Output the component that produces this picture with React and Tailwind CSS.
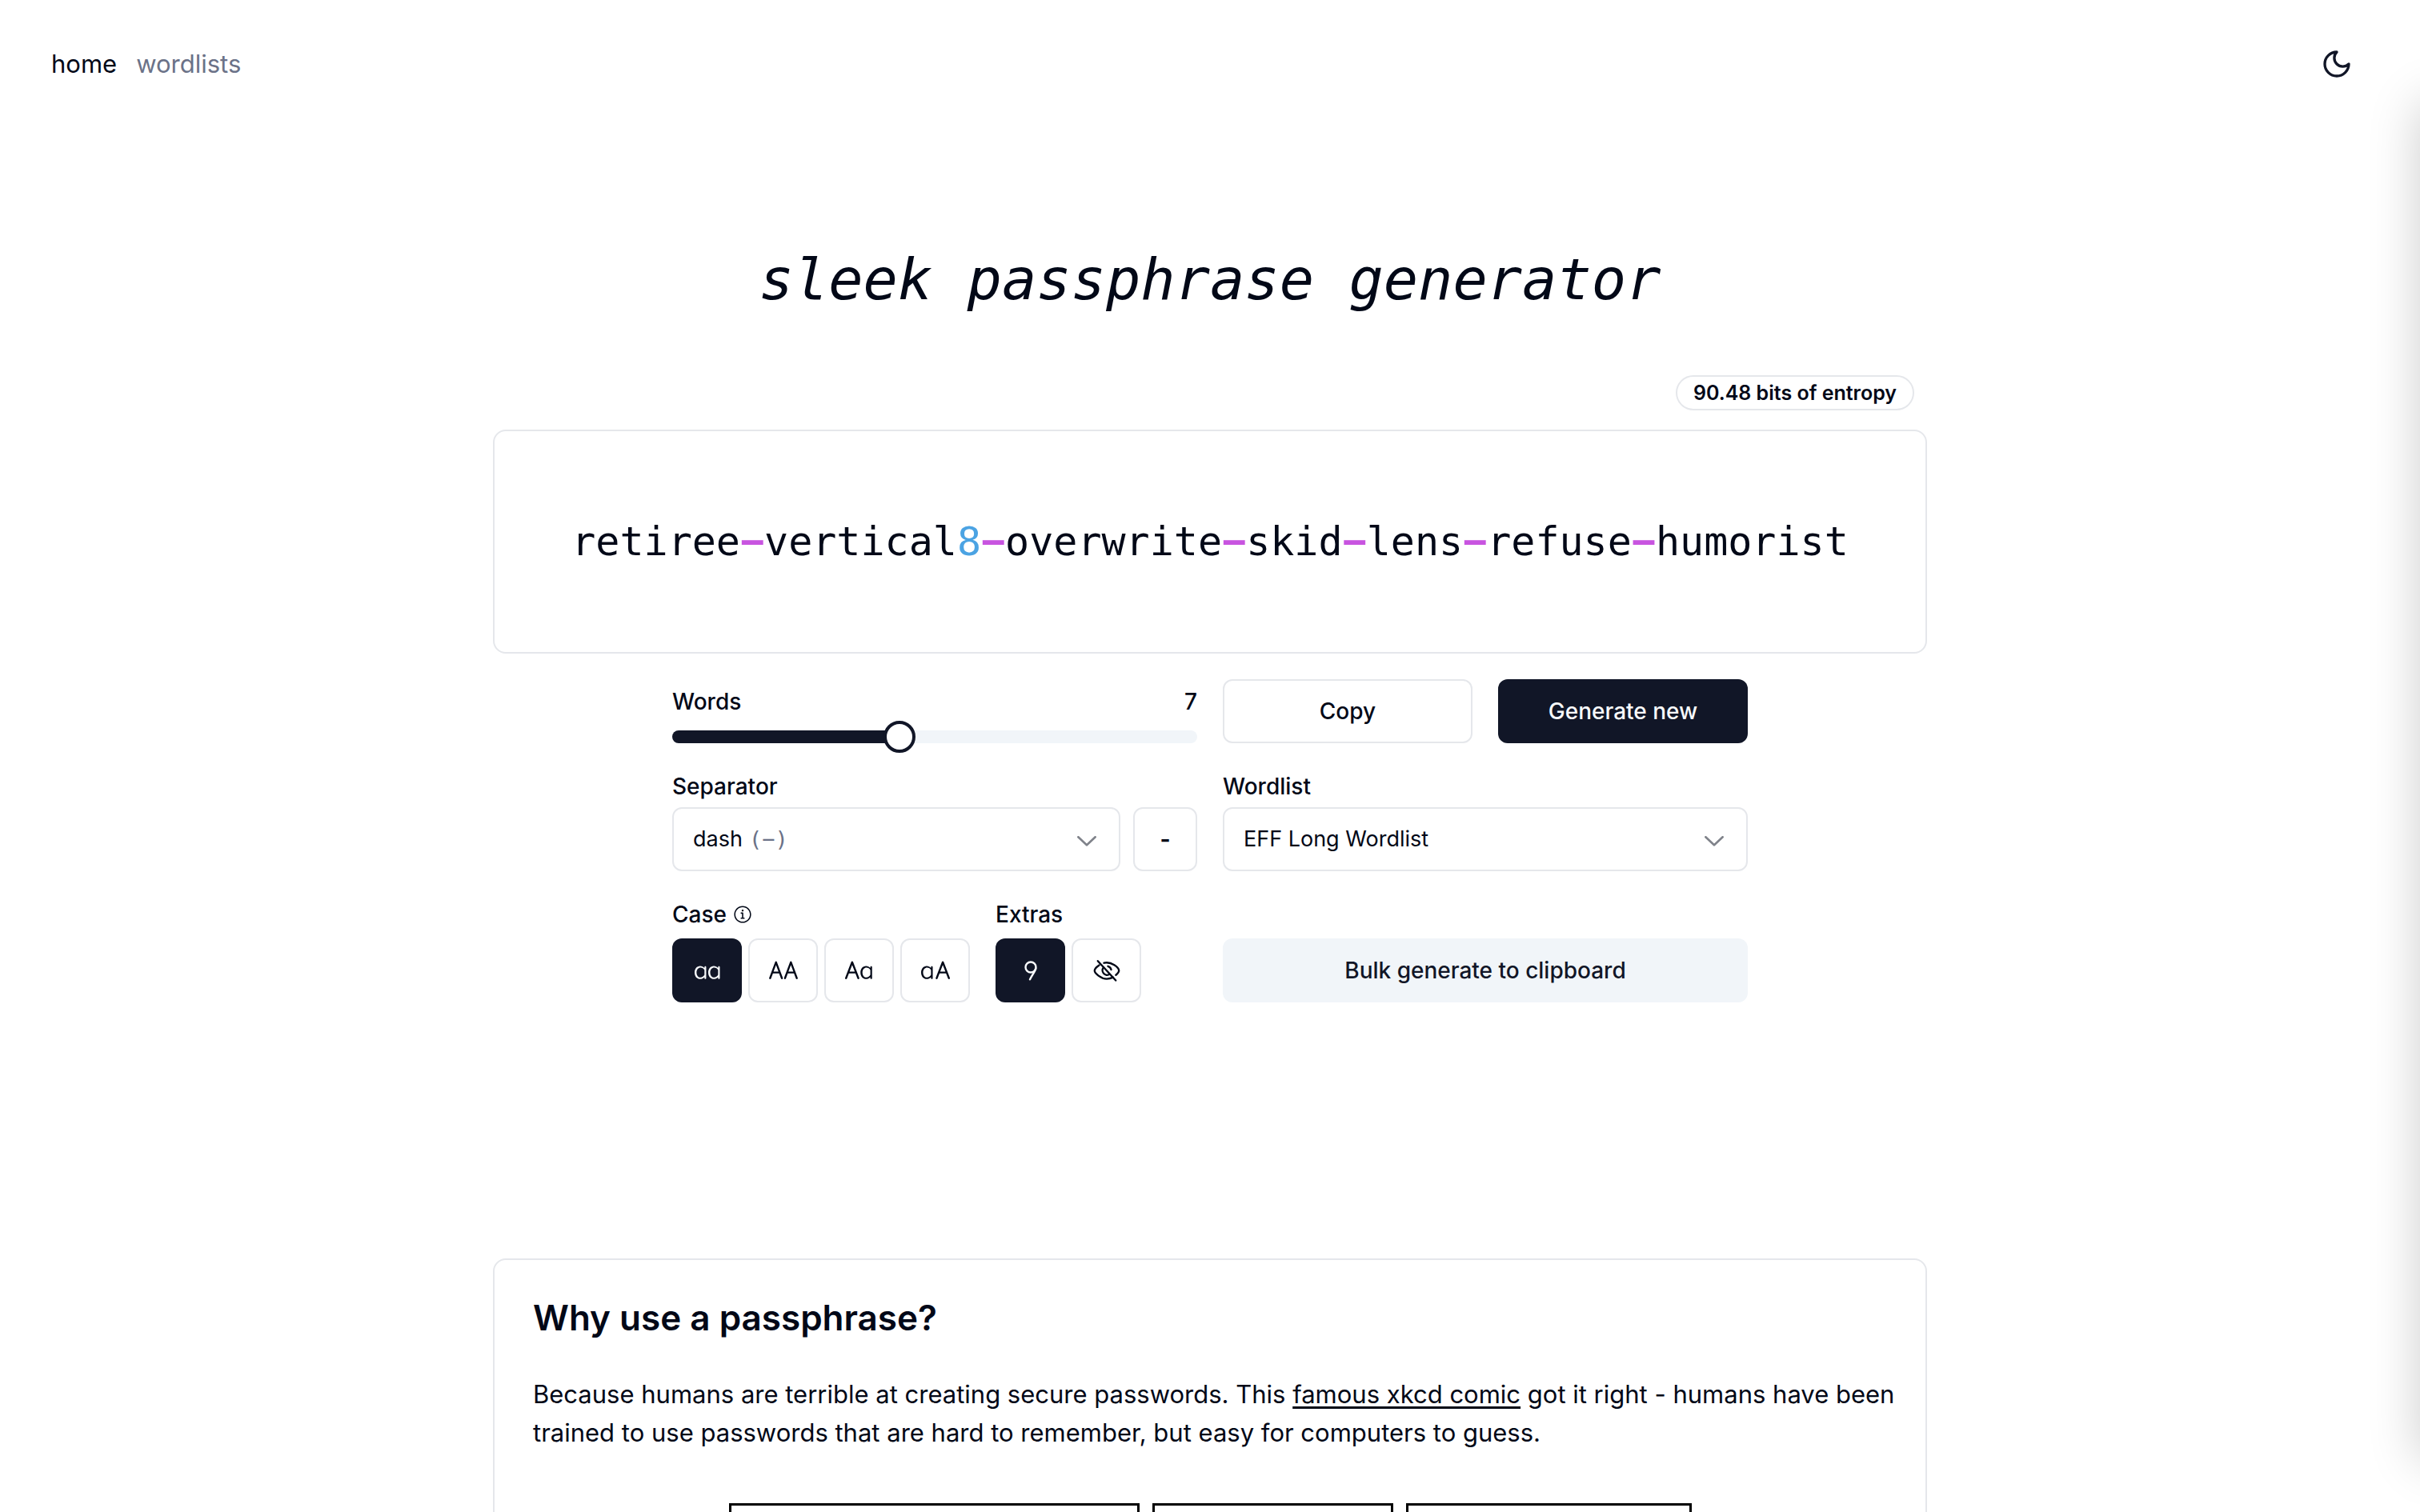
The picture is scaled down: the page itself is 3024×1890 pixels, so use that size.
import React, { useState } from "react";
import {
  RxChevronDown,
  RxInfoCircled,
  RxLetterCaseCapitalize,
  RxLetterCaseLowercase,
  RxLetterCaseToggle,
  RxLetterCaseUppercase,
} from "react-icons/rx";

const passphrase = ["retiree", "−", "vertical", "8", "−", "overwrite", "−", "skid", "−", "lens", "−", "refuse", "−", "humorist"];

function MoonIcon() {
  return (
    <svg viewBox="0 0 24 24" className="size-10" fill="none" stroke="currentColor" strokeWidth="2" strokeLinecap="round" strokeLinejoin="round" aria-hidden="true">
      <path d="M12 3a6 6 0 0 0 9 9 9 9 0 1 1-9-9Z" />
    </svg>
  );
}

function NineIcon() {
  return (
    <svg viewBox="0 0 40 40" className="size-10" fill="none" stroke="currentColor" strokeWidth="2.4" strokeLinecap="round" strokeLinejoin="round" aria-hidden="true">
      <circle cx="20" cy="16" r="6.500" />
      <path d="M26.300 17.500C25.500 21.500 21.500 26 19 31.300" />
    </svg>
  );
}

function EyeOffIcon() {
  return (
    <svg viewBox="0 0 40 40" className="size-10" fill="none" stroke="currentColor" strokeWidth="2.400" strokeLinecap="round" strokeLinejoin="round" aria-hidden="true">
      <path d="M10.500 13.500C8 15.200 4.800 18.500 4.800 20.300C4.800 23.500 12.500 30.600 20 30.600C22.800 30.600 25.500 29.900 28 28.700" />
      <path d="M16.500 10.700C26 8.600 35.200 16.500 35.200 20.300C35.200 22 33.500 24 31.400 25.700" />
      <path d="M21.500 14.800A5.800 5.800 0 0 1 25.500 19" />
      <path d="M16 16.200A5.800 5.800 0 0 0 23.600 24.800" />
      <path d="M8.800 8.200L31.200 32.500" />
    </svg>
  );
}

function ToggleButton({ active, label, onClick, children }) {
  return (
    <button
      type="button"
      aria-label={label}
      aria-pressed={active}
      onClick={onClick}
      className={
        active
          ? "flex h-20 w-[87px] items-center justify-center rounded-xl bg-[#111627] text-slate-50"
          : "flex h-20 w-[87px] items-center justify-center rounded-xl border-2 border-gray-200 bg-white"
      }
    >
      {children}
    </button>
  );
}

function Chevron() {
  return (
    <RxChevronDown
      className="pointer-events-none z-10 col-start-1 row-start-1 mr-[22px] size-10 self-center justify-self-end opacity-50"
      aria-hidden="true"
    />
  );
}

export default function App() {
  const [words, setWords] = useState(7);
  const [letterCase, setLetterCase] = useState("lower");
  const [digit, setDigit] = useState(true);
  const [hidden, setHidden] = useState(false);
  const cases = [
    ["lower", "Lowercase", RxLetterCaseLowercase],
    ["upper", "Uppercase", RxLetterCaseUppercase],
    ["capital", "Capitalize", RxLetterCaseCapitalize],
    ["toggle", "Mixed case", RxLetterCaseToggle],
  ];
  return (
    <div className="relative h-screen overflow-hidden bg-white font-[Inter,sans-serif] text-[31px] text-[#020817]">
      <header className="flex h-40 items-center justify-between px-16">
        <nav className="flex gap-6">
          <a href="#home">home</a>
          <a href="#wordlists" className="text-[#6b7288]">wordlists</a>
        </nav>
        <button type="button" aria-label="Toggle theme" className="flex size-20 items-center justify-center text-[#111627]">
          <MoonIcon />
        </button>
      </header>

      <main className="mx-auto flex max-w-[1792px] flex-col">
        <h1 className="mt-[149px] text-center font-['DejaVu_Sans_Mono',monospace] text-7xl leading-20 italic">
          sleek passphrase generator
        </h1>

        <div className="mt-20 mr-4 self-end rounded-full border-2 border-gray-200 px-5 py-1 text-[25px] leading-8 font-semibold">
          90.48 bits of entropy
        </div>

        <div className="mt-6 flex h-70 items-center justify-center rounded-2xl border-2 border-gray-200 font-['DejaVu_Sans_Mono',monospace] text-[50px]">
          <output>
            {passphrase.map((part, i) => (
              <span key={i} className={part === "−" ? "font-bold text-[#c854e0]" : part === "8" ? "text-[#4ba3e3]" : ""}>
                {part}
              </span>
            ))}
          </output>
        </div>

        <div className="mx-auto mt-8 grid w-full max-w-[1344px] grid-cols-2 gap-x-8 text-[28px] leading-7">
          <div className="flex h-20 flex-col justify-between pt-[14px]">
            <div className="flex justify-between font-medium">
              <label htmlFor="words">Words</label>
              <output htmlFor="words">{words}</output>
            </div>
            <div className="grid h-4 items-center">
              <div className="col-start-1 row-start-1 h-4 overflow-hidden rounded-full bg-slate-100">
                <div className="h-4 bg-[#111627]" style={{ width: `${((words - 1) / 14) * 100}%` }} />
              </div>
              <input
                id="words"
                type="range"
                min="1"
                max="15"
                value={words}
                onChange={(e) => setWords(Number(e.target.value))}
                className="col-start-1 row-start-1 m-0 h-4 w-full appearance-none bg-transparent [&::-webkit-slider-thumb]:size-10 [&::-webkit-slider-thumb]:appearance-none [&::-webkit-slider-thumb]:rounded-full [&::-webkit-slider-thumb]:border-4 [&::-webkit-slider-thumb]:border-[#111627] [&::-webkit-slider-thumb]:bg-white"
              />
            </div>
          </div>
          <div className="grid grid-cols-2 gap-8 font-medium">
            <button type="button" className="h-20 rounded-xl border-2 border-gray-200">Copy</button>
            <button type="button" className="h-20 rounded-xl bg-[#111627] text-slate-50">Generate new</button>
          </div>

          <div className="mt-10">
            <label htmlFor="separator" className="block font-medium">Separator</label>
            <div className="mt-3 flex gap-4">
              <div className="grid min-w-0 flex-1">
                <select
                  id="separator"
                  defaultValue="dash"
                  className="col-start-1 row-start-1 h-20 w-full appearance-none rounded-xl border-2 border-gray-200 bg-white px-6"
                >
                  <option value="dash" aria-label="dash"></option>
                </select>
                <span className="pointer-events-none z-10 col-start-1 row-start-1 flex items-center gap-2 pl-[26px] text-[27px]" aria-hidden="true">
                  dash
                  <span className="font-['DejaVu_Sans_Mono',monospace] text-[#6b7288]">(−)</span>
                </span>
                <Chevron />
              </div>
              <input
                aria-label="Custom separator"
                defaultValue="-"
                className="size-20 rounded-xl border-2 border-gray-200 text-center font-bold"
              />
            </div>
          </div>
          <div className="mt-10">
            <label htmlFor="wordlist" className="block font-medium">Wordlist</label>
            <div className="mt-3 grid">
              <select
                id="wordlist"
                defaultValue="long"
                className="col-start-1 row-start-1 h-20 w-full appearance-none rounded-xl border-2 border-gray-200 bg-white px-6 text-[27px] leading-9"
              >
                <option value="long">EFF Long Wordlist</option>
              </select>
              <Chevron />
            </div>
          </div>

          <div className="mt-10 flex gap-8">
            <fieldset>
              <legend className="flex items-center gap-2 font-medium">
                Case
                <RxInfoCircled className="size-6" aria-hidden="true" />
              </legend>
              <div className="mt-4 flex gap-2">
                {cases.map(([key, label, Icon]) => (
                  <ToggleButton key={key} label={label} active={letterCase === key} onClick={() => setLetterCase(key)}>
                    <Icon className="size-9" />
                  </ToggleButton>
                ))}
              </div>
            </fieldset>
            <fieldset>
              <legend className="font-medium">Extras</legend>
              <div className="mt-4 flex gap-2">
                <ToggleButton label="Add number" active={digit} onClick={() => setDigit(!digit)}>
                  <NineIcon />
                </ToggleButton>
                <ToggleButton label="Hide passphrase" active={hidden} onClick={() => setHidden(!hidden)}>
                  <EyeOffIcon />
                </ToggleButton>
              </div>
            </fieldset>
          </div>
          <button type="button" className="h-20 self-end rounded-xl bg-slate-100 font-medium text-[#111627]">
            Bulk generate to clipboard
          </button>
        </div>

        <section className="mt-80 rounded-2xl border-2 border-gray-200 pt-12 pr-8 pb-12 pl-12">
          <h2 className="text-[44px] leading-12 font-semibold">Why use a passphrase?</h2>
          <p className="mt-12 leading-12">
            Because humans are terrible at creating secure passwords. This{" "}
            <a href="#comic" className="underline decoration-3 underline-offset-4">famous xkcd comic</a> got it right - humans have been
            trained to use passwords that are hard to remember, but easy for computers to guess.
          </p>
          <div className="mt-16 mr-4 flex justify-center gap-4">
            <div className="h-96 w-[513px] border-[3px] border-black" />
            <div className="h-96 w-[301px] border-[3px] border-black" />
            <div className="h-96 w-[357px] border-[3px] border-black" />
          </div>
        </section>
      </main>

      <aside aria-hidden="true" className="absolute top-32 bottom-16 left-full w-96 shadow-[0_0_60px_rgba(0,0,0,0.2)]" />
    </div>
  );
}
